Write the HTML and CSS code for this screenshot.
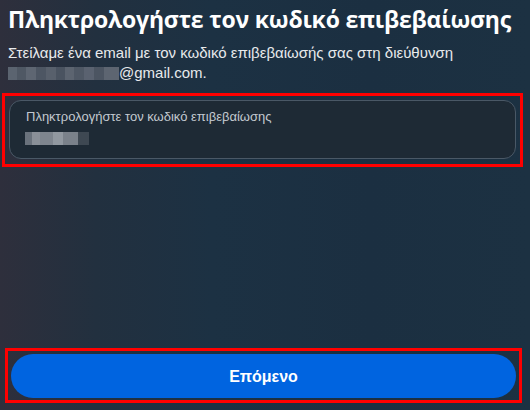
FILE: index.html
```html
<!DOCTYPE html>
<html lang="el">
<head>
    <meta charset="UTF-8">
    <meta name="viewport" content="width=device-width, initial-scale=1.0">
    <title>Κωδικός επιβεβαίωσης</title>
    <link rel="stylesheet" href="styles.css">
</head>
<body>
    <div class="page">
        <h1 class="title">Πληκτρολογήστε τον κωδικό επιβεβαίωσης</h1>
        <p class="subtitle">
            Στείλαμε ένα email με τον κωδικό επιβεβαίωσής σας στη διεύθυνση
            <span class="blur-email"></span>@gmail.com.
        </p>

        <!-- πεδίο κωδικού -->
        <div class="highlight highlight-input">
            <div class="code-field">
                <label for="code">Πληκτρολογήστε τον κωδικό επιβεβαίωσης</label>
                <div class="blur-code" id="code"></div>
            </div>
        </div>

        <div class="spacer"></div>

        <div class="highlight highlight-btn">
            <button type="button" class="next-btn">Επόμενο</button>
        </div>
    </div>
</body>
</html>
```

FILE: styles.css
```css
* {
    margin: 0;
    padding: 0;
    box-sizing: border-box;
}

html, body {
    height: 100%;
}

body {
    font-family: 'Liberation Sans', Arial, sans-serif;
    color: #fff;
    background: linear-gradient(90deg, #2e2f3c 0%, #22303f 18%, #1c3143 40%, #1b2f41 70%, #1c3142 100%);
    overflow: hidden;
}

.page {
    height: 100%;
    display: flex;
    flex-direction: column;
    padding: 4px 14px 7px 9px;
}

.title {
    font-family: 'Open Sans', 'Noto Sans', sans-serif;
    font-size: 23px;
    line-height: 30px;
    font-weight: 700;
    letter-spacing: -0.2px;
    margin-left: -1px;
}

.subtitle {
    margin-top: 9px;
    font-size: 15px;
    line-height: 20px;
    color: #e8eaec;
    margin-left: -1px;
}

.blur-email {
    display: inline-block;
    width: 111px;
    height: 13px;
    vertical-align: -2px;
    background: linear-gradient(90deg,
        #5b6470 0, #5b6470 9px,
        #4f5864 9px, #4f5864 18px,
        #5e6672 18px, #5e6672 28px,
        #4d5663 28px, #4d5663 38px,
        #58606c 38px, #58606c 48px,
        #4a5360 48px, #4a5360 57px,
        #5c6470 57px, #5c6470 66px,
        #4f5865 66px, #4f5865 76px,
        #5a6270 76px, #5a6270 86px,
        #4c5562 86px, #4c5562 96px,
        #5d6571 96px, #5d6571 111px);
}

.highlight {
    border: 3px solid #ff0000;
    margin: 0 -7px;
}

.highlight-input {
    margin-top: 10px;
    padding: 4px 4px 5px;
}

.highlight-btn {
    margin: 0 -6px 0 -4px;
    padding: 3px 3px 2px;
}

.code-field {
    height: 59px;
    border: 1px solid #4a5866;
    border-radius: 12px;
    background-color: #1e2a35;
    padding: 8px 16px;
}

.code-field label {
    display: block;
    font-size: 13px;
    line-height: 16px;
    color: #c3c9d0;
}

.blur-code {
    margin-top: 7px;
    width: 64px;
    height: 13px;
    background: linear-gradient(90deg,
        #6a727c 0, #6a727c 7px,
        #8a9098 7px, #8a9098 15px,
        #7e858e 15px, #7e858e 28px,
        #9198a0 28px, #9198a0 38px,
        #7a818a 38px, #7a818a 53px,
        #3e4852 53px, #3e4852 64px);
    margin-left: -1px;
}

.spacer {
    flex: 1;
}

.next-btn {
    width: 100%;
    height: 44px;
    border: none;
    border-radius: 22px;
    background-color: #0064e0;
    color: #fff;
    font-family: 'Liberation Sans', Arial, sans-serif;
    font-size: 16px;
    font-weight: 700;
    padding-top: 2px;
    cursor: pointer;
}
```
